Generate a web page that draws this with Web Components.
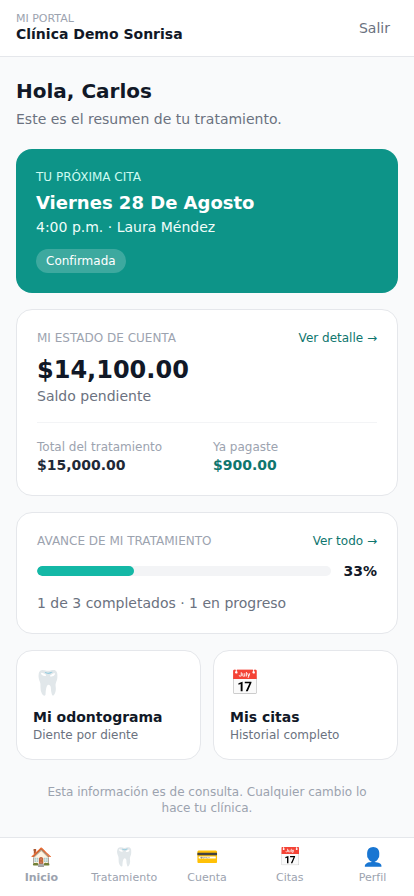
<!DOCTYPE html>
<html lang="es">
<head>
<meta charset="utf-8">
<meta name="viewport" content="width=device-width, initial-scale=1">
<title>Mi portal · Clínica Demo Sonrisa</title>
<style>
html, body { height: 100%; }
body { margin: 0; background: #f9fafb; color: #111827; font-family: "DejaVu Sans", sans-serif; font-size: 14px; line-height: 20px; }
</style>
</head>
<body>
<portal-app></portal-app>
<script>
const define = (name, markup) => {
  const template = document.createElement('template');
  template.innerHTML = '<style>*{box-sizing:border-box}h1,h2,p,dl,dd{margin:0}</style>' + markup;
  customElements.define(name, class extends HTMLElement {
    constructor() {
      super();
      this.attachShadow({ mode: 'open' }).append(template.content.cloneNode(true));
    }
  });
};

define('portal-header', `
<style>
:host { display: block; background: #fff; border-bottom: 1px solid #e5e7eb; }
header { display: flex; align-items: center; justify-content: space-between; padding: 12px 16px; }
.label { font-size: 11px; line-height: 12px; color: #9ca3af; text-transform: uppercase; }
.name { font-weight: 700; line-height: 18px; }
button { border: 0; background: none; padding: 6px 8px; font: inherit; color: #6b7280; }
</style>
<header><div><p class="label"><slot name="label"></slot></p><p class="name"><slot></slot></p></div><button type="button">Salir</button></header>`);

define('portal-greeting', `
<style>
:host { display: block; padding-bottom: 4px; }
h1 { font-size: 20px; line-height: 28px; }
p { margin-top: 4px; color: #6b7280; }
</style>
<h1><slot></slot></h1><p><slot name="summary"></slot></p>`);

define('next-visit', `
<style>
:host { display: block; padding: 20px; border-radius: 16px; background: #0d9488; color: #fff; }
.label { font-size: 12px; line-height: 16px; color: #ccfbf1; text-transform: uppercase; }
h2 { margin-top: 4px; font-size: 18px; line-height: 28px; }
.detail { color: #f0fdfa; }
.badge { display: inline-block; margin-top: 12px; padding: 4px 10px; border-radius: 12px; background: rgb(255 255 255 / .2); font-size: 12px; line-height: 16px; vertical-align: top; }
</style>
<p class="label">Tu próxima cita</p><h2><slot name="date"></slot></h2><p class="detail"><slot></slot></p><span class="badge"><slot name="status"></slot></span>`);

define('portal-card', `
<style>
:host { display: block; padding: 20px; border: 1px solid #e5e7eb; border-radius: 16px; background: #fff; }
header { display: flex; align-items: center; justify-content: space-between; font-size: 12px; line-height: 16px; }
h2 { font-size: 12px; font-weight: 400; color: #9ca3af; text-transform: uppercase; }
::slotted(a) { color: #0f766e; text-decoration: none; }
</style>
<header><h2><slot name="title"></slot></h2><slot name="action"></slot></header><slot></slot>`);

define('account-balance', `
<style>
:host { display: block; }
.total { margin-top: 8px; font-size: 24px; line-height: 32px; font-weight: 700; }
.caption { color: #6b7280; }
dl { display: grid; grid-template-columns: 1fr 1fr; gap: 12px; margin-top: 16px; padding-top: 16px; border-top: 1px solid #f3f4f6; }
dt { font-size: 12px; line-height: 16px; color: #9ca3af; }
dd { font-weight: 700; color: #1f2937; }
.paid { color: #0f766e; }
</style>
<p class="total">$14,100.00</p><p class="caption">Saldo pendiente</p>
<dl><div><dt>Total del tratamiento</dt><dd>$15,000.00</dd></div><div><dt>Ya pagaste</dt><dd class="paid">$900.00</dd></div></dl>`);

define('treatment-progress', `
<style>
:host { display: block; }
.row { display: flex; align-items: center; gap: 12px; margin-top: 12px; }
.track { flex: 1; height: 10px; border-radius: 5px; background: #f3f4f6; overflow: hidden; }
.fill { width: 33%; height: 100%; border-radius: 5px; background: #14b8a6; }
.value { font-weight: 700; }
.caption { margin-top: 12px; color: #6b7280; }
</style>
<div class="row"><div class="track" role="progressbar" aria-label="Avance de mi tratamiento" aria-valuenow="33" aria-valuemin="0" aria-valuemax="100"><div class="fill"></div></div><span class="value">33%</span></div>
<p class="caption">1 de 3 completados · 1 en progreso</p>`);

define('portal-shortcut', `
<style>
:host { display: block; }
a { display: block; height: 100%; padding: 16px; border: 1px solid #e5e7eb; border-radius: 16px; background: #fff; color: #111827; text-decoration: none; }
.icon { display: block; font-size: 24px; line-height: 32px; }
.title { display: block; margin-top: 8px; font-weight: 700; }
.note { display: block; font-size: 12px; line-height: 16px; color: #6b7280; }
</style>
<a href="#"><span class="icon"><slot name="icon"></slot></span><span class="title"><slot></slot></span><span class="note"><slot name="note"></slot></span></a>`);

define('nav-item', `
<style>
:host { display: block; }
a { display: flex; flex-direction: column; align-items: center; gap: 2px; padding: 8px 0 10px; color: #9ca3af; text-decoration: none; font-size: 11px; line-height: 16px; }
:host([active]) a { font-weight: 700; }
.icon { font-size: 18px; line-height: 22px; font-weight: 400; }
</style>
<a href="#"><span class="icon"><slot name="icon"></slot></span><span><slot></slot></span></a>`);

define('portal-nav', `
<style>
:host { display: block; background: #fff; border-top: 1px solid #e5e7eb; }
nav { display: grid; grid-template-columns: repeat(5, 1fr); }
</style>
<nav aria-label="Principal"><slot></slot></nav>`);

define('portal-app', `
<style>
:host { display: flex; flex-direction: column; min-height: 100%; }
main { flex: 1; display: flex; flex-direction: column; gap: 16px; padding: 20px 16px; }
.shortcuts { display: grid; grid-template-columns: 1fr 1fr; gap: 12px; }
.notice { padding: 8px 16px 0; text-align: center; font-size: 12px; line-height: 16px; color: #9ca3af; }
portal-nav { position: sticky; bottom: 0; }
</style>
<portal-header><span slot="label">Mi portal</span>Clínica Demo Sonrisa</portal-header>
<main>
<portal-greeting>Hola, Carlos<span slot="summary">Este es el resumen de tu tratamiento.</span></portal-greeting>
<next-visit><span slot="date">Viernes 28 De Agosto</span>4:00 p.m. · Laura Méndez<span slot="status">Confirmada</span></next-visit>
<portal-card><span slot="title">Mi estado de cuenta</span><a slot="action" href="#">Ver detalle →</a><account-balance></account-balance></portal-card>
<portal-card><span slot="title">Avance de mi tratamiento</span><a slot="action" href="#">Ver todo →</a><treatment-progress></treatment-progress></portal-card>
<div class="shortcuts">
<portal-shortcut><span slot="icon">🦷</span>Mi odontograma<span slot="note">Diente por diente</span></portal-shortcut>
<portal-shortcut><span slot="icon">📅</span>Mis citas<span slot="note">Historial completo</span></portal-shortcut>
</div>
<p class="notice">Esta información es de consulta. Cualquier cambio lo hace tu clínica.</p>
</main>
<portal-nav>
<nav-item active><span slot="icon">🏠</span>Inicio</nav-item>
<nav-item><span slot="icon">🦷</span>Tratamiento</nav-item>
<nav-item><span slot="icon">💳</span>Cuenta</nav-item>
<nav-item><span slot="icon">📅</span>Citas</nav-item>
<nav-item><span slot="icon">👤</span>Perfil</nav-item>
</portal-nav>`);
</script>
</body>
</html>
